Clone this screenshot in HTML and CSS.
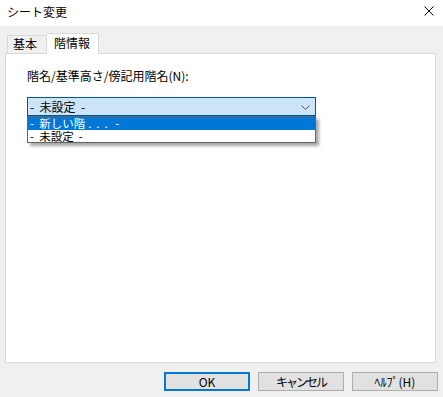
FILE: index.html
```html
<!DOCTYPE html>
<html lang="ja">
<head>
	<meta charset="UTF-8">
	<title>シート変更</title>
	<link rel="stylesheet" href="styles.css">
</head>
<body>
	<div class="titlebar">
		<span class="title">シート変更</span>
		<svg class="close" width="10" height="10" viewBox="0 0 10 10">
			<path d="M0.5 0.5 L9.5 9.5 M9.5 0.5 L0.5 9.5" stroke="#000" stroke-width="1" fill="none"/>
		</svg>
	</div>

	<div class="tabs">
		<div class="tab">基本</div>
		<div class="tab active">階情報</div>
	</div>

	<div class="panel">
		<div class="label">階名/基準高さ/傍記用階名(N):</div>
		<div class="combo">
			<span class="combo-text">-  未設定  -</span>
			<svg class="chevron" width="9" height="5" viewBox="0 0 9 5">
				<path d="M0.5 0.5 L4.5 4.5 L8.5 0.5" stroke="#555" stroke-width="1" fill="none"/>
			</svg>
			<div class="droplist">
				<div class="item selected">-  新しい階<span class="dots">...</span> -</div>
				<div class="item">-  未設定  -</div>
			</div>
		</div>
	</div>

	<div class="buttons">
		<button class="btn default">OK</button>
		<button class="btn narrow">キャンセル</button>
		<button class="btn">ﾍﾙﾌﾟ(H)</button>
	</div>
</body>
</html>
```

FILE: styles.css
```css
/* ダイアログ全体 */
body {
	margin: 0;
	width: 443px;
	height: 397px;
	background: #f0f0f0;
	font-family: "Noto Sans CJK JP", "Liberation Sans", sans-serif;
	font-size: 12px;
	color: #000;
	overflow: hidden;
}

.titlebar {
	height: 26px;
	background: #fff;
	display: flex;
	align-items: center;
	justify-content: space-between;
	padding: 0 9px 0 7px;
}

.title {
	font-size: 12px;
	line-height: 14px;
	margin-top: -2px;
}

.close {
	margin-top: -4px;
}

/* タブ */
.tabs {
	display: flex;
	align-items: flex-end;
	margin: 7px 0 0 7px;
	height: 20px;
	position: relative;
	z-index: 1;
}

.tab {
	box-sizing: border-box;
	height: 18px;
	width: 40px;
	border: 1px solid #d9d9d9;
	border-bottom: none;
	background: #f0f0f0;
	line-height: 16px;
	padding-left: 5px;
}

.tab.active {
	height: 21px;
	width: 52px;
	margin-bottom: -1px;
	background: #fff;
	border-left: none;
	padding-left: 7px;
	line-height: 18px;
}

.panel {
	box-sizing: border-box;
	margin: 0 7px 0 5px;
	height: 310px;
	background: #fff;
	border: 1px solid #d9d9d9;
	padding: 15px 0 0 21px;
}

.label {
	line-height: 14px;
}

/* コンボボックス */
.combo {
	position: relative;
	box-sizing: border-box;
	margin-top: 14px;
	width: 289px;
	height: 19px;
	border: 1px solid #005499;
	background: #cce4f7;
	display: flex;
	align-items: center;
	justify-content: space-between;
	padding: 0 5px 0 2px;
}

.combo-text {
	line-height: 15px;
	white-space: pre;
}

.chevron {
	margin-top: 1px;
}

.droplist {
	position: absolute;
	top: 18px;
	left: -1px;
	box-sizing: border-box;
	width: 289px;
	border: 1px solid #646464;
	background: #fff;
	box-shadow: 3px 3px 3px rgba(0, 0, 0, 0.35);
}

.item {
	height: 12px;
	line-height: 12px;
	font-size: 11.5px;
	padding-left: 2px;
	white-space: pre;
}

.item.selected {
	height: 13px;
	line-height: 13px;
	background: #0078d7;
	color: #fff;
}

.dots {
	letter-spacing: 5px;
	padding-left: 3px;
}

/* ボタン */
.buttons {
	display: flex;
	justify-content: flex-end;
	gap: 8px;
	margin: 9px 5px 0 0;
}

.btn {
	box-sizing: border-box;
	width: 86px;
	height: 19px;
	border: 1px solid #adadad;
	background: #e1e1e1;
	font-family: inherit;
	font-size: 12px;
	line-height: 15px;
	padding: 0;
	color: #000;
}

.btn.narrow {
	letter-spacing: -2px;
}

.btn.default {
	border: 2px solid #0078d7;
}
```
